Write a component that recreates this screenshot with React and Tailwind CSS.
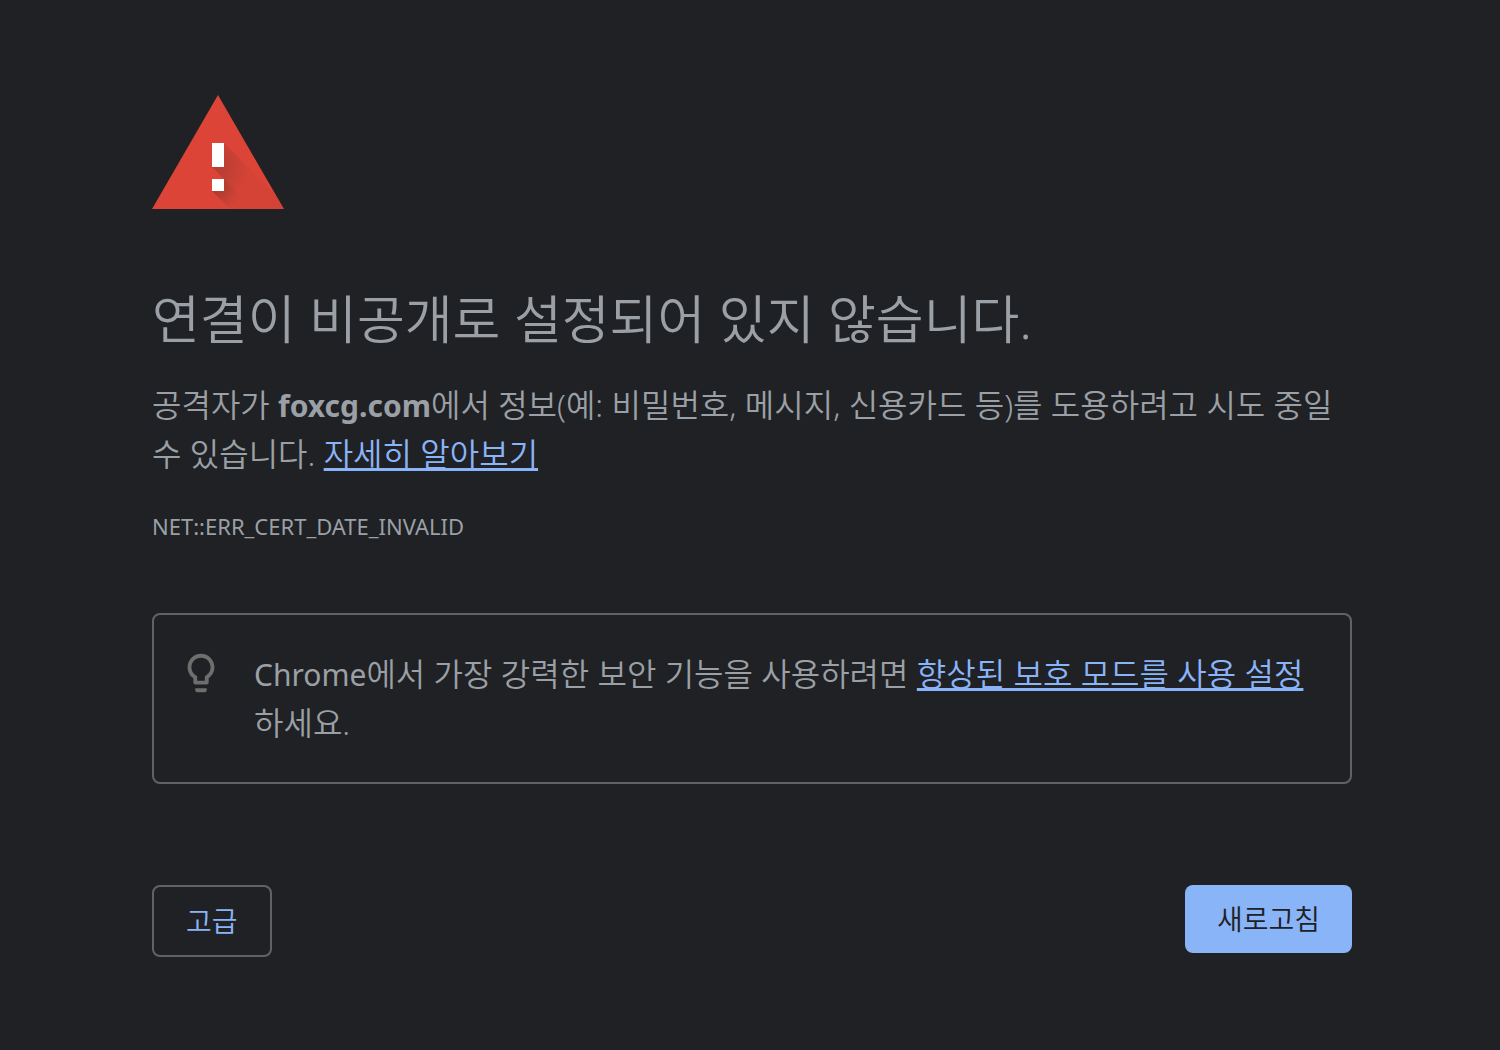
import React from "react";

function WarningIcon() {
    return (
        <svg viewBox="0 0 132 114" className="w-[132px] h-[114px]" aria-hidden="true">
            <defs>
                <radialGradient id="shadeTop" gradientUnits="userSpaceOnUse" cx="62" cy="72" r="34">
                    <stop offset="0" stopColor="#3e2723" stopOpacity="0.22" />
                    <stop offset="0.3" stopColor="#3e2723" stopOpacity="0.2" />
                    <stop offset="1" stopColor="#3e2723" stopOpacity="0.04" />
                </radialGradient>
                <radialGradient id="shadeBottom" gradientUnits="userSpaceOnUse" cx="62" cy="94" r="26">
                    <stop offset="0" stopColor="#3e2723" stopOpacity="0.2" />
                    <stop offset="0.4" stopColor="#3e2723" stopOpacity="0.16" />
                    <stop offset="1" stopColor="#3e2723" stopOpacity="0" />
                </radialGradient>
                <clipPath id="triangle">
                    <path d="M66 0L132 114H0Z" />
                </clipPath>
            </defs>
            <path d="M66 0L132 114H0Z" fill="#db4437" />
            <g clipPath="url(#triangle)">
                <path d="M72 48L138 114H78L60 96L72 84L60 72Z" fill="url(#shadeTop)" />
                <path d="M72 84L102 114H78L60 96Z" fill="url(#shadeBottom)" />
            </g>
            <path d="M60 48h12v24H60zM60 84h12v12H60z" fill="#fff" />
        </svg>
    );
}

function BulbIcon() {
    return (
        <svg viewBox="0 0 24 24" className="size-[46px] shrink-0 fill-[#6e6e6e]" aria-hidden="true">
            <path d="M9 21c0 .5.4 1 1 1h4c.6 0 1-.5 1-1v-1H9v1zm3-19C8.1 2 5 5.1 5 9c0 2.4 1.200 4.500 3 5.700V17c0 .5.4 1 1 1h6c.6 0 1-.5 1-1v-2.300c1.800-1.300 3-3.400 3-5.700 0-3.900-3.100-7-7-7zm2.900 11.100l-.9.600V16h-4v-2.300l-.9-.600C7.800 12.200 7 10.600 7 9c0-2.800 2.200-5 5-5s5 2.200 5 5c0 1.600-.8 3.200-2.100 4.100z" />
        </svg>
    );
}

export default function App() {
    return (
        <main
            lang="ko"
            className="min-h-screen pl-1 bg-[#202124] text-[#9aa0a6] font-[350] font-['Noto_Sans','Noto_Sans_CJK_KR',sans-serif]"
        >
            <div className="mx-auto w-5/6 max-w-[1200px] pt-[95px] pb-[93px]">
                <WarningIcon />

                <h1 className="mt-20 text-[52px] leading-[60px]">연결이 비공개로 설정되어 있지 않습니다.</h1>

                <p className="mt-8 text-[32px] leading-12">
                    공격자가 <strong className="text-[30px] font-bold">foxcg.com</strong>에서 정보(예: 비밀번호, 메시지, 신용카드 등)를 도용하려고 시도 중일 수 있습니다.{" "}
                    <a href="#learn" className="text-[#8ab4f8] underline decoration-[3px]">자세히 알아보기</a>
                </p>

                <p className="mt-8 text-[22px] leading-8 font-normal">NET::ERR_CERT_DATE_INVALID</p>

                {/* Enhanced protection tip */}
                <div className="mt-[71px] flex gap-[30px] rounded-lg border-2 border-[#5f6368] pl-6 pr-8 py-[35px]">
                    <BulbIcon />
                    <p className="text-[32px] leading-12">
                        <span className="text-[30px] font-normal">Chrome</span>에서 가장 강력한 보안 기능을 사용하려면{" "}
                        <a href="#enhanced" className="text-[#8ab4f8] underline decoration-[3px]">향상된 보호 모드를 사용 설정</a>하세요.
                    </p>
                </div>

                <div className="mt-[101px] flex items-start justify-between text-[28px]">
                    <button type="button" className="h-[72px] px-8 rounded-lg border-2 border-[#5f6368] text-[#8ab4f8]">고급</button>
                    <button type="button" className="h-[68px] px-8 rounded-lg bg-[#8ab4f8] text-[#202124]">새로고침</button>
                </div>
            </div>
        </main>
    );
}
